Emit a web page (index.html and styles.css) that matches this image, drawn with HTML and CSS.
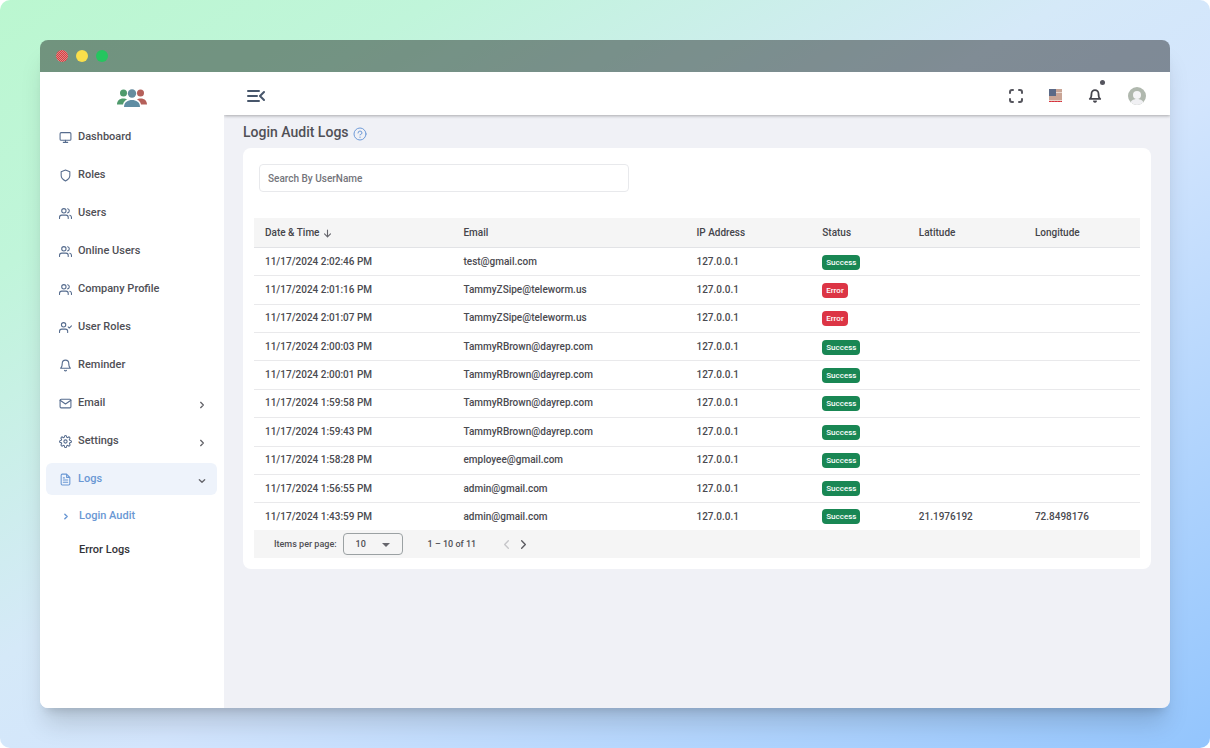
FILE: index.html
```html
<!DOCTYPE html>
<html lang="en">
<head>
<meta charset="utf-8">
<meta name="viewport" content="width=device-width, initial-scale=1">
<title>Login Audit Logs</title>
<link rel="stylesheet" href="styles.css">
</head>
<body>
<svg class="sprite" aria-hidden="true">
  <symbol id="i-monitor" viewBox="0 0 24 24"><rect x="2" y="3" width="20" height="14" rx="2"/><path d="M8 21h8M12 17v4"/></symbol>
  <symbol id="i-shield" viewBox="0 0 24 24"><path d="M12 22s8-4 8-10V5l-8-3-8 3v7c0 6 8 10 8 10z"/></symbol>
  <symbol id="i-users" viewBox="0 0 24 24"><path d="M17 21v-2a4 4 0 0 0-4-4H5a4 4 0 0 0-4 4v2"/><circle cx="9" cy="7" r="4"/><path d="M23 21v-2a4 4 0 0 0-3-3.87M16 3.13a4 4 0 0 1 0 7.75"/></symbol>
  <symbol id="i-usercheck" viewBox="0 0 24 24"><path d="M16 21v-2a4 4 0 0 0-4-4H5a4 4 0 0 0-4 4v2"/><circle cx="8.500" cy="7" r="4"/><path d="M17 11l2 2 4-4"/></symbol>
  <symbol id="i-bell" viewBox="0 0 24 24"><path d="M18 8A6 6 0 0 0 6 8c0 7-3 9-3 9h18s-3-2-3-9M13.730 21a2 2 0 0 1-3.460 0"/></symbol>
  <symbol id="i-mail" viewBox="0 0 24 24"><rect x="2" y="4" width="20" height="16" rx="2"/><path d="M22 6l-10 7L2 6"/></symbol>
  <symbol id="i-gear" viewBox="0 0 24 24"><circle cx="12" cy="12" r="3"/><path d="M19.400 15a1.650 1.650 0 0 0 .33 1.820l.06.06a2 2 0 0 1-2.830 2.830l-.06-.06a1.650 1.650 0 0 0-2.800 1.180V21a2 2 0 0 1-4 0v-.09A1.650 1.650 0 0 0 7.180 19.730l-.06.06a2 2 0 0 1-2.830-2.830l.06-.06A1.650 1.650 0 0 0 3.170 14H3a2 2 0 0 1 0-4h.09A1.650 1.650 0 0 0 4.270 7.180l-.06-.06a2 2 0 0 1 2.830-2.830l.06.06A1.650 1.650 0 0 0 10 3.170V3a2 2 0 0 1 4 0v.09a1.650 1.650 0 0 0 2.820 1.180l.06-.06a2 2 0 0 1 2.830 2.830l-.06.06A1.650 1.650 0 0 0 20.830 10H21a2 2 0 0 1 0 4h-.09a1.650 1.650 0 0 0-1.510 1z"/></symbol>
  <symbol id="i-file" viewBox="0 0 24 24"><path d="M14 2H6a2 2 0 0 0-2 2v16a2 2 0 0 0 2 2h12a2 2 0 0 0 2-2V8zM14 2v6h6M16 13H8M16 17H8M10 9H8"/></symbol>
  <symbol id="i-right" viewBox="0 0 24 24"><path d="M8 4l8 8-8 8"/></symbol>
  <symbol id="i-left" viewBox="0 0 24 24"><path d="M16 4l-8 8 8 8"/></symbol>
  <symbol id="i-down" viewBox="0 0 24 24"><path d="M4 8l8 8 8-8"/></symbol>
  <symbol id="i-arrow" viewBox="0 0 24 24"><path d="M12 3v18M4 13l8 8 8-8"/></symbol>
</svg>

<div class="window">
  <div class="titlebar"><span class="dot red"></span><span class="dot yellow"></span><span class="dot green"></span></div>
  <div class="app">
    <aside class="sidebar">
      <a class="logo" href="#" aria-label="Home">
        <svg viewBox="0 0 30 20" width="30" height="20">
          <g fill="#4f9a6c"><circle cx="6.500" cy="5" r="3.500"/><path d="M0 16.500c0-4 3-6 6-6 2 0 3 0 4 1-2 1-3.500 2.500-4 5z"/></g>
          <g fill="#b5605a"><circle cx="23.500" cy="5" r="3.500"/><path d="M30 16.500c0-4-3-6-6-6-2 0-3 0-4 1 2 1 3.500 2.500 4 5z"/></g>
          <circle cx="15" cy="5.500" r="4.200" fill="#668c9e"/><path d="M7 19c0-5 4-7 8-7s8 2 8 7z" fill="#5f8da3"/>
        </svg>
      </a>
      <nav class="menu">
        <a class="item" href="#"><svg class="icon"><use href="#i-monitor"/></svg>Dashboard</a>
        <a class="item" href="#"><svg class="icon"><use href="#i-shield"/></svg>Roles</a>
        <a class="item" href="#"><svg class="icon"><use href="#i-users"/></svg>Users</a>
        <a class="item" href="#"><svg class="icon"><use href="#i-users"/></svg>Online Users</a>
        <a class="item" href="#"><svg class="icon"><use href="#i-users"/></svg>Company Profile</a>
        <a class="item" href="#"><svg class="icon"><use href="#i-usercheck"/></svg>User Roles</a>
        <a class="item" href="#"><svg class="icon"><use href="#i-bell"/></svg>Reminder</a>
        <a class="item" href="#"><svg class="icon"><use href="#i-mail"/></svg>Email<svg class="chev"><use href="#i-right"/></svg></a>
        <a class="item" href="#"><svg class="icon"><use href="#i-gear"/></svg>Settings<svg class="chev"><use href="#i-right"/></svg></a>
        <a class="item active" href="#"><svg class="icon"><use href="#i-file"/></svg>Logs<svg class="chev"><use href="#i-down"/></svg></a>
      </nav>
      <nav class="submenu">
        <a class="sub current" href="#"><svg class="mark"><use href="#i-right"/></svg>Login Audit</a>
        <a class="sub" href="#"><span class="mark"></span>Error Logs</a>
      </nav>
    </aside>

    <div class="main">
      <header class="topbar">
        <button class="tool" aria-label="Collapse menu"><svg class="collapse" viewBox="0 0 18 14"><path d="M1 2h11M1 7h9M1 12h11M17 3l-4 4 4 4"/></svg></button>
        <div class="tools">
          <button class="tool" aria-label="Full screen"><svg class="full" viewBox="0 0 14 14"><path d="M1 4V3q0-2 2-2h1M10 1h1q2 0 2 2v1M13 10v1q0 2-2 2h-1M4 13H3q-2 0-2-2v-1"/></svg></button>
          <button class="tool" aria-label="Language"><svg class="flag" viewBox="0 0 13 13"><path fill="#c9a596" d="M0 0h13v13H0z"/><path fill="#ead9d0" d="M7 3h6v1H7z"/><path fill="#5b6a87" d="M0 0h7v7H0z"/><path stroke="#d92f3c" stroke-dasharray="2 1" d="M0 12.500h13"/><path stroke="#ead9d0" d="M0 11.500h13"/></svg></button>
          <button class="tool notify" aria-label="Notifications"><svg class="bell"><use href="#i-bell"/></svg><span class="badge"></span></button>
          <button class="tool" aria-label="Account"><svg class="avatar" viewBox="0 0 18 18"><clipPath id="disc"><circle cx="9" cy="9" r="9"/></clipPath><g clip-path="url(#disc)"><path fill="#b0b8ae" d="M0 0h18v18H0z"/><circle cx="9" cy="8" r="4" fill="#f4f4f6"/><path fill="#f0f0f3" d="M2 18c0-4 3-6 7-6s7 2 7 6z"/></g></svg></button>
        </div>
      </header>

      <main class="content">
        <h1 class="title">Login Audit Logs
          <svg class="help" viewBox="0 0 14 14" role="img" aria-label="Help"><circle cx="7" cy="7" r="6"/><path d="M5 6q0-2 2-2t2 2q0 1-2 2v0M7 10v0.500"/></svg>
        </h1>
        <section class="card">
          <input class="search" type="text" placeholder="Search By UserName" aria-label="Search By UserName">
          <table class="logs">
            <colgroup><col class="c-date"><col class="c-email"><col class="c-ip"><col class="c-status"><col class="c-geo"><col class="c-geo"></colgroup>
            <thead><tr><th>Date &amp; Time <svg class="sort"><use href="#i-arrow"/></svg></th><th>Email</th><th>IP Address</th><th>Status</th><th>Latitude</th><th>Longitude</th></tr></thead>
            <tbody>
              <tr><td>11/17/2024 2:02:46 PM</td><td>test@gmail.com</td><td>127.0.0.1</td><td><span class="tag ok">Success</span></td><td></td><td></td></tr>
              <tr><td>11/17/2024 2:01:16 PM</td><td>TammyZSipe@teleworm.us</td><td>127.0.0.1</td><td><span class="tag bad">Error</span></td><td></td><td></td></tr>
              <tr><td>11/17/2024 2:01:07 PM</td><td>TammyZSipe@teleworm.us</td><td>127.0.0.1</td><td><span class="tag bad">Error</span></td><td></td><td></td></tr>
              <tr><td>11/17/2024 2:00:03 PM</td><td>TammyRBrown@dayrep.com</td><td>127.0.0.1</td><td><span class="tag ok">Success</span></td><td></td><td></td></tr>
              <tr><td>11/17/2024 2:00:01 PM</td><td>TammyRBrown@dayrep.com</td><td>127.0.0.1</td><td><span class="tag ok">Success</span></td><td></td><td></td></tr>
              <tr><td>11/17/2024 1:59:58 PM</td><td>TammyRBrown@dayrep.com</td><td>127.0.0.1</td><td><span class="tag ok">Success</span></td><td></td><td></td></tr>
              <tr><td>11/17/2024 1:59:43 PM</td><td>TammyRBrown@dayrep.com</td><td>127.0.0.1</td><td><span class="tag ok">Success</span></td><td></td><td></td></tr>
              <tr><td>11/17/2024 1:58:28 PM</td><td>employee@gmail.com</td><td>127.0.0.1</td><td><span class="tag ok">Success</span></td><td></td><td></td></tr>
              <tr><td>11/17/2024 1:56:55 PM</td><td>admin@gmail.com</td><td>127.0.0.1</td><td><span class="tag ok">Success</span></td><td></td><td></td></tr>
              <tr><td>11/17/2024 1:43:59 PM</td><td>admin@gmail.com</td><td>127.0.0.1</td><td><span class="tag ok">Success</span></td><td>21.1976192</td><td>72.8498176</td></tr>
            </tbody>
          </table>
          <div class="pager">
            <label class="size-label" for="size">Items per page:</label>
            <span class="select"><select id="size"><option>10</option><option>20</option><option>30</option></select><span class="caret"></span></span>
            <span class="range">1 – 10 of 11</span>
            <button class="page" disabled aria-label="Previous page"><svg><use href="#i-left"/></svg></button>
            <button class="page" aria-label="Next page"><svg><use href="#i-right"/></svg></button>
          </div>
        </section>
      </main>
    </div>
  </div>
</div>
</body>
</html>
```

FILE: styles.css
```css
* { box-sizing: border-box; }
html { background: #fff; }
body {
  margin: 0;
  min-height: 100vh;
  padding: 40px;
  display: flex;
  border-radius: 10px;
  background: linear-gradient(to bottom right, #bbf7d0, #c0f5da 18%, #d5e9f8 44%, #d3e5fd 56%, #93c5fd);
  font: 500 11px/16px Roboto, sans-serif;
  color: #505056;
}
button, input, select { font: inherit; color: inherit; }
button { padding: 0; border: 0; background: none; display: flex; }
a { color: inherit; text-decoration: none; }
svg { fill: none; stroke-linecap: round; stroke-linejoin: round; }
.sprite { position: absolute; width: 0; height: 0; }

.window {
  flex: 1;
  display: flex;
  flex-direction: column;
  border-radius: 8px;
  box-shadow: 0 20px 25px -5px rgba(0, 0, 0, 0.15), 0 8px 10px -6px rgba(0, 0, 0, 0.15);
}
.titlebar {
  height: 32px;
  display: flex;
  align-items: center;
  gap: 8px;
  padding: 0 16px;
  border-radius: 8px 8px 0 0;
  background: rgba(0, 0, 0, 0.4);
}
.dot { width: 12px; height: 12px; border-radius: 50%; }
.red { background: repeating-conic-gradient(#e5333c 0 25%, #d4938c 0 50%) 0 0 / 2px 2px; }
.yellow { background: #fadf4b; }
.green { background: #25c55f; }

.app {
  flex: 1;
  display: flex;
  border-radius: 0 0 8px 8px;
  overflow: hidden;
  background: #f0f1f6;
}
.sidebar { position: relative; z-index: 1; width: 184px; flex: none; padding: 16px 7px 16px 6px; background: #fff; }
.logo { display: flex; justify-content: center; height: 33px; }
.logo svg { stroke: none; }
.menu { display: grid; gap: 6px; }
.item {
  display: flex;
  align-items: center;
  gap: 6px;
  height: 32px;
  padding: 0 11px 0 13px;
  border-radius: 6px;
}
.icon { width: 13px; height: 13px; stroke: #566c8e; stroke-width: 2; }
.chev { width: 8px; height: 8px; margin: 4px 0 0 auto; stroke: #66666c; stroke-width: 4; }
.active { background: #eef3fb; color: #6a98d4; }
.active .icon { stroke: #6a98d4; }
.submenu { display: grid; gap: 2px; padding: 5px 0 0 15px; }
.sub { display: flex; align-items: center; gap: 8px; height: 32px; color: #333338; }
.current { color: #6a98d4; }
.mark { width: 10px; height: 7px; stroke: #6a98d4; stroke-width: 5; }

.main { flex: 1; min-width: 0; }
.topbar {
  height: 43px;
  display: flex;
  align-items: center;
  justify-content: space-between;
  padding: 4px 24px 0 23px;
  background: #fff;
  box-shadow: 0 1px 3px rgba(0, 0, 0, 0.3);
}
.tools { display: flex; align-items: center; gap: 26px; }
.tool { position: relative; }
.collapse { width: 18px; height: 14px; stroke: #47566b; stroke-width: 2; }
.full { width: 14px; height: 14px; stroke: #55555d; stroke-width: 2; }
.flag { width: 13px; height: 13px; }
.bell { width: 14px; height: 14px; stroke: #45454d; stroke-width: 3; }
.badge { position: absolute; top: -9px; right: -3px; width: 5px; height: 5px; border-radius: 50%; background: #55555e; }
.avatar { width: 18px; height: 18px; }

.content { padding: 7px 19px 20px 19px; }
.title { display: flex; align-items: center; gap: 4px; margin: 0 0 6px; font-size: 14px; line-height: 20px; font-weight: 500; }
.help { width: 14px; height: 14px; margin-top: 4px; stroke: #6f9bd8; stroke-width: 1; }
.card { padding: 16px 11px 11px; border-radius: 8px; background: #fff; }
.search {
  display: block;
  width: 370px;
  max-width: 100%;
  height: 28px;
  margin: 0 0 26px 5px;
  padding: 0 8px;
  border: 1px solid #e8e9ec;
  border-radius: 4px;
  background: #fff;
  font-size: 10px;
}
.search::placeholder { color: #74757b; opacity: 1; }

.logs { width: 100%; height: 312px; table-layout: fixed; border-collapse: separate; border-spacing: 0; font-size: 10px; }
.c-date { width: 22.4%; }
.c-email { width: 26.3%; }
.c-ip { width: 14.2%; }
.c-status { width: 10.9%; }
.c-geo { width: 13.1%; }
th, td { padding: 0 0 0 11px; text-align: left; vertical-align: middle; font-weight: 500; white-space: nowrap; }
td { border-bottom: 1px solid #e9e9eb; color: #4a4a50; }
th { height: 30px; background: #f5f5f5; border-bottom: 1px solid #e2e3e6; color: #45454b; }
tbody tr:last-child td { border-bottom: 0; }
.sort { width: 9px; height: 9px; margin-left: 1px; stroke: #66666c; stroke-width: 3; vertical-align: -2px; }
.tag {
  display: inline-block;
  padding: 0 4px;
  border-radius: 4px;
  color: #fff;
  font-size: 8px;
  line-height: 15px;
  vertical-align: middle;
}
.ok { background: #198754; }
.bad { background: #dc3545; }

.pager { display: flex; align-items: center; height: 28px; padding-left: 20px; background: #f5f5f5; font-size: 9px; }
.size-label { white-space: nowrap; }
.select { position: relative; margin: 0 25px 0 6px; }
.select select {
  display: block;
  appearance: none;
  width: 60px;
  height: 22px;
  padding: 0 12px;
  border: 1px solid #9ba1a3;
  border-radius: 4px;
  background: none;
}
.caret { position: absolute; right: 13px; top: 10px; border: 4px solid transparent; border-top-color: #66666c; border-bottom: 0; pointer-events: none; }
.range { margin-right: 25px; }
.page { margin-right: 6px; }
.page svg { width: 11px; height: 11px; stroke: #5a5a60; stroke-width: 3; }
.page:disabled svg { stroke: #c6c6c9; }
```
